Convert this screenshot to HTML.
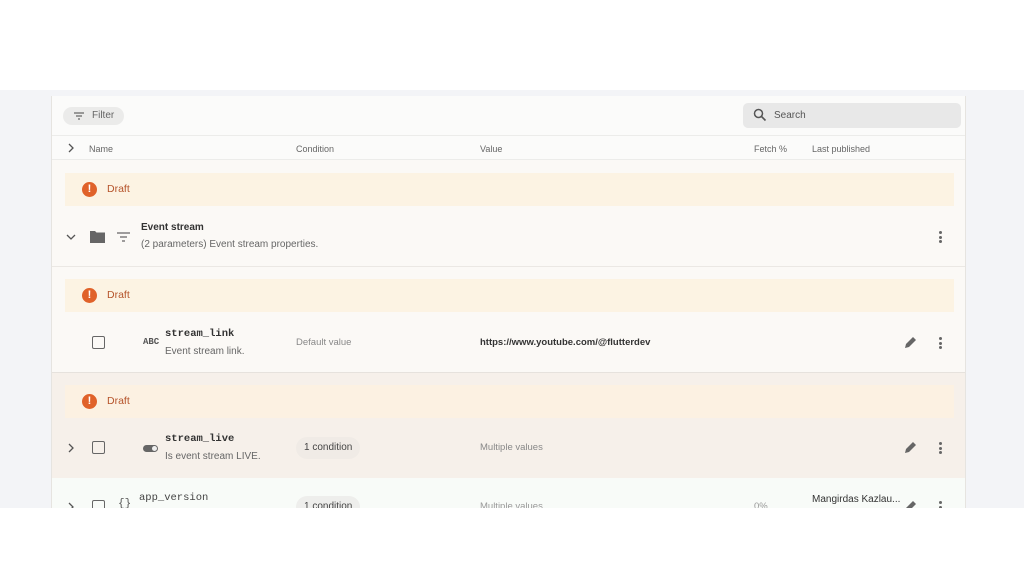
<!DOCTYPE html>
<html><head><meta charset="utf-8"><style>
*{margin:0;padding:0;box-sizing:border-box}
body{width:1024px;height:574px;background:#fff;font-family:"Liberation Sans",Arial,sans-serif;position:relative;overflow:hidden}
.bg{position:absolute;left:0;top:90px;width:1024px;height:418px;background:#f3f4f7;overflow:hidden}
.card{position:absolute;left:51px;top:6px;width:915px;height:420px;background:#fbf9f6;border-left:1px solid #e6e4e0;border-right:1px solid #e6e4e0}
.a{position:absolute}
.t{font-size:9.5px;color:#666}
.draft{position:absolute;left:13px;width:889px;height:33px;background:#fcf3e3}
.draft .ic{position:absolute;left:17px;top:9px;width:15px;height:15px;border-radius:50%;background:#e0622a;color:#fff;font-size:11px;font-weight:bold;text-align:center;line-height:15px}
.draft span{position:absolute;left:42px;top:10px;font-size:10.5px;color:#b5532a}
.mono{font-family:"Liberation Mono",monospace;font-weight:bold;font-size:10.5px;color:#333}
.cb{position:absolute;width:13px;height:13px;border:1.6px solid #666;border-radius:2px}
.chip{position:absolute;height:22px;padding:0 8px;border-radius:11px;background:#f0ebe6;font-size:10px;color:#444;line-height:22px}
.dots{position:absolute;width:3px}
.dots i{display:block;width:3px;height:3px;border-radius:50%;background:#666;margin-bottom:1.5px}
</style></head><body>
<div class="bg">
<div class="card">
 <div class="a" style="left:0;top:0;width:913px;height:40px;background:#fbfbfa;border-bottom:1px solid #ececea"></div>
 <div class="a" style="left:11px;top:11px;width:61px;height:18px;border-radius:9px;background:#ebebea"></div>
 <svg class="a" style="left:21px;top:15px" width="12" height="10" viewBox="0 0 12 10"><path d="M1 2h10M3 5h6M5 8h2" stroke="#666" stroke-width="1.2"/></svg>
 <div class="a t" style="left:40px;top:14px;font-size:10px">Filter</div>
 <div class="a" style="left:691px;top:7px;width:218px;height:25px;border-radius:5px;background:#e8e8e8"></div>
 <svg class="a" style="left:701px;top:12px" width="14" height="14" viewBox="0 0 14 14"><circle cx="5.5" cy="5.5" r="4" fill="none" stroke="#555" stroke-width="1.5"/><path d="M8.5 8.5l4 4" stroke="#555" stroke-width="1.6"/></svg>
 <div class="a t" style="left:722px;top:14px;font-size:10px;color:#555">Search</div>
 <div class="a" style="left:0;top:40px;width:913px;height:24px;background:#fbfbfa;border-bottom:1px solid #ececea"></div>
 <svg class="a" style="left:15px;top:47px" width="8" height="10"><path d="M2 1l4 4-4 4" fill="none" stroke="#555" stroke-width="1.3"/></svg>
 <div class="a t" style="left:37px;top:48px;font-size:9px">Name</div>
 <div class="a t" style="left:244px;top:48px;font-size:9px">Condition</div>
 <div class="a t" style="left:428px;top:48px;font-size:9px">Value</div>
 <div class="a t" style="left:702px;top:48px;font-size:9px">Fetch %</div>
 <div class="a t" style="left:760px;top:48px;font-size:9px">Last published</div>

 <div class="draft" style="top:77px"><div class="ic">!</div><span>Draft</span></div>
 <svg class="a" style="left:14px;top:137px" width="10" height="8"><path d="M1 2l4 4 4-4" fill="none" stroke="#555" stroke-width="1.3"/></svg>
 <svg class="a" style="left:38px;top:134px" width="15" height="13" viewBox="0 0 15 13"><path d="M0 1h5l1.5 1.5H15V13H0z" fill="#666"/></svg>
 <svg class="a" style="left:65px;top:136px" width="13" height="10" viewBox="0 0 13 10"><path d="M0 1h13M3 5h7M5 9h3" stroke="#666" stroke-width="1.2"/></svg>
 <div class="a" style="left:89px;top:126px;font-size:10px;font-weight:bold;color:#333">Event stream</div>
 <div class="a" style="left:89px;top:143px;font-size:10px;color:#666">(2 parameters) Event stream properties.</div>
 <div class="dots" style="left:887px;top:135px"><i></i><i></i><i></i></div>
 <div class="a" style="left:0;top:170px;width:913px;height:1px;background:#ebe8e4"></div>

 <div class="draft" style="top:183px"><div class="ic">!</div><span>Draft</span></div>
 <div class="cb" style="left:40px;top:240px"></div>
 <div class="a" style="left:91px;top:241px;font-size:9px;font-family:'Liberation Mono',monospace;color:#555;font-weight:bold">ABC</div>
 <div class="a mono" style="left:113px;top:232px">stream_link</div>
 <div class="a" style="left:113px;top:250px;font-size:10px;color:#666">Event stream link.</div>
 <div class="a t" style="left:244px;top:241px;color:#888">Default value</div>
 <div class="a" style="left:428px;top:241px;font-size:9.5px;font-weight:bold;color:#333">https://www.youtube.com/@flutterdev</div>
 <svg class="a" style="left:852px;top:239px" width="14" height="14" viewBox="0 0 14 14"><path d="M1 13l1-4 7-7 3 3-7 7z" fill="#666"/></svg>
 <div class="dots" style="left:887px;top:241px"><i></i><i></i><i></i></div>

 <div class="a" style="left:0;top:276px;width:913px;height:106px;background:#f6f0ea;border-top:1px solid #e6e2dd"></div>
 <div class="draft" style="top:289px;background:#fcf1e2"><div class="ic">!</div><span>Draft</span></div>
 <svg class="a" style="left:15px;top:347px" width="8" height="10"><path d="M2 1l4 4-4 4" fill="none" stroke="#555" stroke-width="1.3"/></svg>
 <div class="cb" style="left:40px;top:345px"></div>
 <div class="a" style="left:91px;top:349px;width:15px;height:7px;border-radius:4px;background:#666"></div>
 <div class="a" style="left:100px;top:350px;width:5px;height:5px;border-radius:50%;background:#eee"></div>
 <div class="a mono" style="left:113px;top:337px">stream_live</div>
 <div class="a" style="left:113px;top:355px;font-size:10px;color:#666">Is event stream LIVE.</div>
 <div class="chip" style="left:244px;top:341px">1 condition</div>
 <div class="a t" style="left:428px;top:346px;color:#888">Multiple values</div>
 <svg class="a" style="left:852px;top:344px" width="14" height="14" viewBox="0 0 14 14"><path d="M1 13l1-4 7-7 3 3-7 7z" fill="#666"/></svg>
 <div class="dots" style="left:887px;top:346px"><i></i><i></i><i></i></div>

 <div class="a" style="left:0;top:382px;width:913px;height:40px;background:#f8fbf8"></div>
 <svg class="a" style="left:15px;top:406px" width="8" height="10"><path d="M2 1l4 4-4 4" fill="none" stroke="#555" stroke-width="1.3"/></svg>
 <div class="cb" style="left:40px;top:404px"></div>
 <div class="a" style="left:66px;top:402px;font-size:11px;color:#555;font-family:'Liberation Mono',monospace">{}</div>
 <div class="a" style="left:87px;top:396px;font-size:10.5px;font-family:'Liberation Mono',monospace;color:#444">app_version</div>
 <div class="chip" style="left:244px;top:400px;background:#eeeeec">1 condition</div>
 <div class="a t" style="left:428px;top:405px;color:#999">Multiple values</div>
 <div class="a t" style="left:702px;top:405px;color:#999">0%</div>
 <div class="a" style="left:760px;top:398px;font-size:10px;color:#333">Mangirdas Kazlau...</div>
 <svg class="a" style="left:852px;top:403px" width="14" height="14" viewBox="0 0 14 14"><path d="M1 13l1-4 7-7 3 3-7 7z" fill="#666"/></svg>
 <div class="dots" style="left:887px;top:405px"><i></i><i></i><i></i></div>
</div>
</div>
</body></html>
